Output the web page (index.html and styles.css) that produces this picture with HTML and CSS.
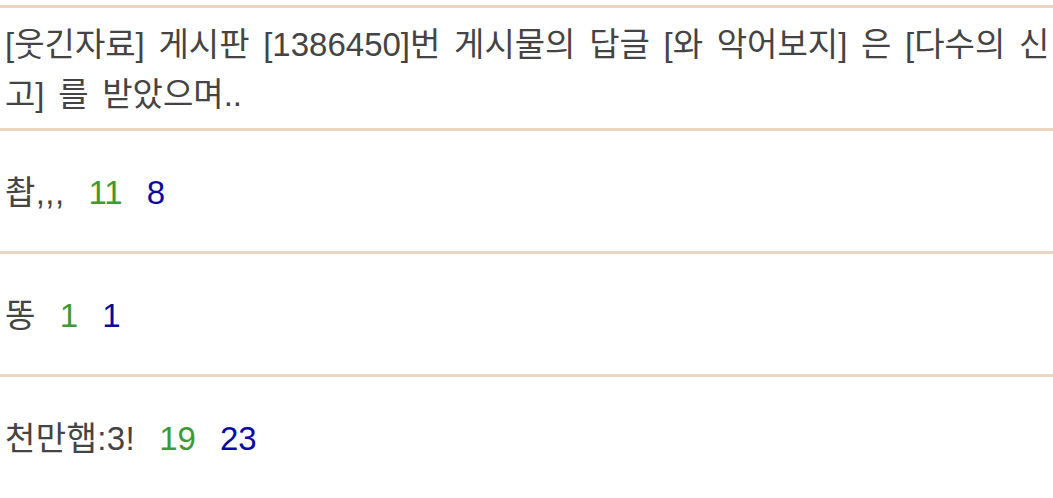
FILE: index.html
```html
<!DOCTYPE html>
<html lang="ko">
<head>
<meta charset="utf-8">
<link rel="stylesheet" href="styles.css">
</head>
<body>
<ul class="list">
  <li class="item notice">[웃긴자료] 게시판 [1386450]번 게시물의 답글 [와 악어보지] 은 [다수의 신고] 를 받았으며..</li>
  <li class="item"><span class="name">촵,,,</span><span class="up">11</span><span class="down">8</span></li>
  <li class="item"><span class="name">똥</span><span class="up">1</span><span class="down">1</span></li>
  <li class="item"><span class="name">천만햅:3!</span><span class="up">19</span><span class="down">23</span></li>
</ul>
</body>
</html>
```

FILE: styles.css
```css
html, body {
  margin: 0;
  padding: 0;
  background: #fff;
}
.list {
  list-style: none;
  margin: 0;
  padding: 5px 0 0;
  font-family: "Liberation Sans", "Noto Sans CJK KR", sans-serif;
  font-size: 33px;
  color: #444;
}
.item {
  box-sizing: border-box;
  border-top: 3px solid #ead5c0;
  height: 123px;
  padding: 4px 0 0 5px;
  display: flex;
  align-items: center;
  line-height: 50px;
  word-spacing: 4.5px;
}
.name {
  letter-spacing: 0.4px;
}
.up {
  color: #3c9a34;
  margin-left: 24px;
}
.down {
  color: #0a0aa0;
  margin-left: 24px;
}
```
